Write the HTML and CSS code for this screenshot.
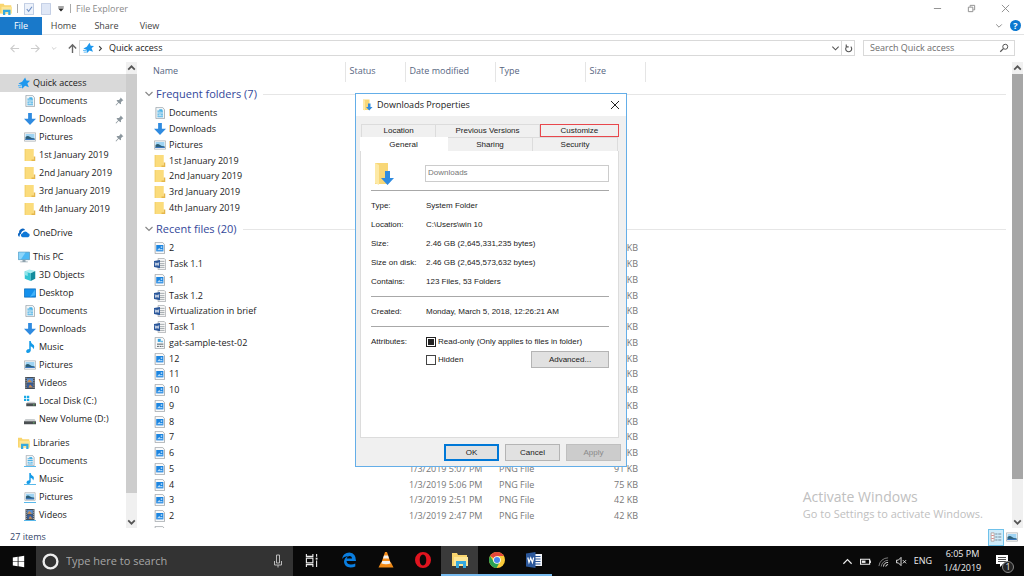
FILE: index.html
```html
<!DOCTYPE html>
<html lang="en">
<head>
  <meta charset="UTF-8" />
  <meta name="viewport" content="width=device-width, initial-scale=1.0"/>
  <title>File Explorer</title>
  <link rel="stylesheet" href="styles.css">
</head>
<body>

  <!-- Shared icons -->
  <svg class="sprite" aria-hidden="true">
    <symbol id="star" viewBox="0 0 16 16"><path d="M9.500.5l1.700 4.300 4.800.2-3.500 3.500 2 5-5-1.700L5.500 15.500l-.3-5L.5 8.700l5-2.500z" fill="#1e98ee"/><path d="M0 11.500h5M1 14h4" stroke="#5db8f5" stroke-width="1.400"/></symbol>
    <symbol id="doc" viewBox="0 0 16 16"><path d="M2.500.5h9l2.500 3v12H2.500z" fill="#f2f5f7" stroke="#97a1a8"/><path d="M4.500 5.500h3m1 0h3.500M4.500 8h7.500m-7.500 2.500h3m1 0h3.500M4.500 13h7.500" stroke="#4bb1e6" stroke-width="1.500"/><path d="M7 3h4v3H7z" fill="#4bb1e6"/></symbol>
    <symbol id="down" viewBox="0 0 16 16"><path d="M5.500 0h5v7.500H16L8 16 0 7.500h5.500z" fill="#2f8be0"/></symbol>
    <symbol id="pic" viewBox="0 0 16 16"><path d="M.5 2.500h15v11H.5z" fill="#fff" stroke="#a3a8ab"/><path d="M2 4h12v8H2z" fill="#9ed3f3"/><path d="M2 8q3-3 6 0 3 2 6 1.500V12H2z" fill="#2d5e75"/><path d="M2 10.500h12V12H2z" fill="#3a78c0"/></symbol>
    <symbol id="folder" viewBox="0 0 16 16"><path d="M1 0h12v16H1z" fill="#fbdc7c"/><path d="M13 10h2v6h-5v-2h3z" fill="#e5b64a"/><path d="M1 0h1v16H1z" fill="#f0ca63"/></symbol>
    <symbol id="cloud" viewBox="0 0 16 16"><path d="M1 12.500a3 3 0 0 1 .5-5A4.500 4.500 0 0 1 9.500 4q-5 .5-5.500 5-2.500 1-1.500 3.500z" fill="#0a64c0"/><path d="M6 13.500a2.700 2.700 0 0 1 0-5.300 4 4 0 0 1 7.300 0 2.700 2.700 0 0 1 .2 5.300z" fill="#0f78d7"/></symbol>
    <symbol id="pc" viewBox="0 0 16 16"><path d="M.5 1.500h15v10H.5z" fill="#4cb9f5" stroke="#5896b8"/><path d="M1 2h9L4 11H1z" fill="#8cd6fb"/><path d="M6 12h4v2h3v1H3v-1h3z" fill="#8fa3ae"/></symbol>
    <symbol id="cube" viewBox="0 0 16 16"><path d="M1 3l6-2.500 8 2-6 3z" fill="#a9eef2"/><path d="M1 3l8 2.500V16l-8-3z" fill="#32c4d2"/><path d="M9 5.500l6-3V13l-6 3z" fill="#138c9d"/><path d="M1 3l4 1.300v5L1 8z" fill="#8ee4ea"/></symbol>
    <symbol id="desk" viewBox="0 0 16 16"><path d="M.5 2.500h15v11H.5z" fill="#1491ed" stroke="#0869b8"/><path d="M15 3v8L8 13z" fill="#43b3fa"/></symbol>
    <symbol id="note" viewBox="0 0 16 16"><path d="M7 0h2q0 3 3 4.500T12.500 11q0-3-3.500-4v6q-.5 2.700-3.500 3T3 13q.5-2.500 4-2.500z" fill="#159be8"/></symbol>
    <symbol id="film" viewBox="0 0 16 16"><path d="M1.500 0h13v16h-13z" fill="#444c55"/><path d="M4 1.500h8v6H4z" fill="#5b8fd0"/><path d="M4 8.500h8v6H4z" fill="#395f9c"/><path d="M7 3l4 4H4zM8 10l4 4H6z" fill="#cf8b48"/><path d="M2.800 1v14M13.200 1v14" stroke="#d4d8db" stroke-dasharray="1.500 1.500"/></symbol>
    <symbol id="disk" viewBox="0 0 16 16"><path d="M2 8h12l2 3H0z" fill="#c9cdcf"/><path d="M0 11h16v4H0z" fill="#4a4f52"/><path d="M12 12.500h2v1h-2z" fill="#68d66b"/></symbol>
    <symbol id="diskc" viewBox="0 0 16 16"><path d="M0 1h3v3H0zm4 0h3v3H4zM0 5h3v3H0zm4 0h3v3H4z" fill="#19a9e6"/><path d="M5 9h9l2 2H3z" fill="#c9cdcf"/><path d="M3 11h13v4H3z" fill="#4a4f52"/><path d="M12 12.500h2v1h-2z" fill="#68d66b"/></symbol>
    <symbol id="lib" viewBox="0 0 16 16"><path d="M0 1h5l1 2h9v11H0z" fill="#f9d56e"/><path d="M2 5h14v9H2z" fill="#fde696"/><path d="M4 9h10v7h-3v-4H7v4H4z" fill="#35a9df"/></symbol>
    <symbol id="png" viewBox="0 0 16 16"><path d="M1.500.5h10l2.500 3v12H1.500z" fill="#f8f9fa" stroke="#9a9fa3"/><path d="M3 4h9.500v8.500H3z" fill="#1c85e0"/><path d="M4 11l3-3 2 2 1.500-1 1.500 2z" fill="#b9dcf8"/><path d="M9 6h2v1.500H9z" fill="#fff"/></symbol>
    <symbol id="word" viewBox="0 0 16 16"><path d="M5.500.5h8l2 2v13h-10z" fill="#f6f6f6" stroke="#a0a4a8"/><path d="M8 4.500h6M8 7.500h6M8 10h6m-6 2.500h6" stroke="#8e959b"/><path d="M0 4l8-1.500v11L0 12z" fill="#2b579a"/><path d="M1.500 6l1 4 1.500-3.500L5.500 10l1-4.200" fill="none" stroke="#fff"/></symbol>
    <symbol id="gat" viewBox="0 0 16 16"><path d="M1.500.5h10l2.500 3v12H1.500z" fill="#f8f9fa" stroke="#9a9fa3"/><path d="M5 2.500h4v4H5z" fill="#35a4e0"/><path d="M9 5h3v2H9z" fill="#6dbde8"/><path d="M4 9.500h8.500M4 12.500h2.500m1 0H10m1 0h1.500" stroke="#50585e" stroke-width="1.300"/></symbol>
    <symbol id="pin" viewBox="0 0 16 16"><path d="M10 1l5 5-2 .7-2.500 2.500.3 3L9.500 13 6.500 10 2 15l-1-1 4.700-4.800-3-2.700L4 5.200l3 .3L9.300 3z" fill="#8b969d"/></symbol>
    <symbol id="up" viewBox="0 0 10 10"><path d="M2 6.500l3-3 3 3" fill="none" stroke="#555" stroke-width="1.600"/></symbol>
    <symbol id="chev" viewBox="0 0 10 10"><path d="M1.500 3l3.500 3.500L8.500 3" fill="none" stroke="currentColor" stroke-width="1.200"/></symbol>
    <symbol id="sheet" viewBox="0 0 16 16"><path d="M2 .5h12v15H2z" fill="#dfe7f6" stroke="#b4c2dc"/></symbol>
    <symbol id="ddown" viewBox="0 0 24 24"><path d="M2 1h13v21H2z" fill="#f8d777"/><path d="M2 1l4 2v20l-4-2z" fill="#fde9a5"/><path d="M12 9h5v7h4l-6.500 7L8 16h4z" fill="#2f8be0"/></symbol>
  </svg>

  <!-- Title bar -->
  <header class="titlebar">
    <svg class="icon"><use href="#lib"/></svg>
    <span class="divider"></span>
    <svg class="icon" viewBox="0 0 16 16"><path d="M2 .5h12v15H2z" fill="#edf2fa" stroke="#aebdd9"/><path d="M5 8l2.500 3L12 5" fill="none" stroke="#6f8fc4" stroke-width="1.500"/></svg>
    <svg class="icon"><use href="#sheet"/></svg>
    <svg class="icon more" viewBox="0 0 10 10"><path d="M1.500 2.500h7" stroke="#222"/><path d="M1.500 4.500h7L5 8z" fill="#222"/></svg>
    <span class="divider"></span>
    <span class="app-name">File Explorer</span>
    <div class="window-buttons">
      <button aria-label="Minimize"><svg viewBox="0 0 10 10"><path d="M1 5h8" stroke="#888"/></svg></button>
      <button aria-label="Restore"><svg viewBox="0 0 10 10"><path d="M1.500 3.500h5v5h-5zM3.500 3V1.500h5v5H7" fill="none" stroke="#888"/></svg></button>
      <button aria-label="Close"><svg viewBox="0 0 10 10"><path d="M1 1l8 8M9 1L1 9" stroke="#888"/></svg></button>
    </div>
  </header>

  <!-- Ribbon tabs -->
  <nav class="ribbon">
    <a href="#" class="file-tab">File</a>
    <a href="#">Home</a>
    <a href="#">Share</a>
    <a href="#">View</a>
    <div class="ribbon-right">
      <svg class="chev"><use href="#chev"/></svg>
      <button class="help" aria-label="Help">?</button>
    </div>
  </nav>

  <!-- Address bar -->
  <div class="address-row">
    <div class="nav-buttons">
      <button aria-label="Back"><svg viewBox="0 0 12 12"><path d="M11 6H2m4-4L2 6l4 4" fill="none" stroke="#ccc" stroke-width="1.200"/></svg></button>
      <button aria-label="Forward"><svg viewBox="0 0 12 12"><path d="M1 6h9M6 2l4 4-4 4" fill="none" stroke="#ccc" stroke-width="1.200"/></svg></button>
      <button class="recent" aria-label="Recent locations"><svg viewBox="0 0 10 10"><use href="#chev"/></svg></button>
      <button aria-label="Up"><svg viewBox="0 0 12 12"><path d="M6 11V2M2 6l4-4 4 4" fill="none" stroke="#666" stroke-width="1.500"/></svg></button>
    </div>
    <div class="address">
      <svg class="icon"><use href="#star"/></svg>
      <svg class="crumb" viewBox="0 0 10 10"><path d="M3.500 2.500L6 5 3.500 7.500" fill="none" stroke="#444" stroke-width="1.200"/></svg>
      <span>Quick access</span>
      <button class="drop" aria-label="Previous locations"><svg viewBox="0 0 10 10"><use href="#chev"/></svg></button>
      <button class="refresh" aria-label="Refresh"><svg viewBox="0 0 12 12"><path d="M3.500 3.500a4 4 0 1 0 5.500 0M3 .8v3h3.200" fill="none" stroke="#555" stroke-width="1.500"/></svg></button>
    </div>
    <label class="search">
      <input type="text" placeholder="Search Quick access" aria-label="Search Quick access">
      <svg viewBox="0 0 12 12"><circle cx="7.500" cy="4.500" r="3" fill="none" stroke="#555" stroke-width="1.200"/><path d="M5.300 6.700L1.500 10.500" stroke="#555" stroke-width="1.500"/></svg>
    </label>
  </div>

  <main class="explorer">
    <!-- Folder tree -->
    <nav class="tree">
      <ul>
        <li class="root selected"><a href="#"><svg class="icon"><use href="#star"/></svg>Quick access</a></li>
        <li><a href="#"><svg class="icon"><use href="#doc"/></svg>Documents</a><svg class="pin"><use href="#pin"/></svg></li>
        <li><a href="#"><svg class="icon"><use href="#down"/></svg>Downloads</a><svg class="pin"><use href="#pin"/></svg></li>
        <li><a href="#"><svg class="icon"><use href="#pic"/></svg>Pictures</a><svg class="pin"><use href="#pin"/></svg></li>
        <li><a href="#"><svg class="icon"><use href="#folder"/></svg>1st January 2019</a></li>
        <li><a href="#"><svg class="icon"><use href="#folder"/></svg>2nd January 2019</a></li>
        <li><a href="#"><svg class="icon"><use href="#folder"/></svg>3rd January 2019</a></li>
        <li><a href="#"><svg class="icon"><use href="#folder"/></svg>4th January 2019</a></li>
      </ul>
      <ul>
        <li class="root"><a href="#"><svg class="icon"><use href="#cloud"/></svg>OneDrive</a></li>
      </ul>
      <ul>
        <li class="root"><a href="#"><svg class="icon"><use href="#pc"/></svg>This PC</a></li>
        <li><a href="#"><svg class="icon"><use href="#cube"/></svg>3D Objects</a></li>
        <li><a href="#"><svg class="icon"><use href="#desk"/></svg>Desktop</a></li>
        <li><a href="#"><svg class="icon"><use href="#doc"/></svg>Documents</a></li>
        <li><a href="#"><svg class="icon"><use href="#down"/></svg>Downloads</a></li>
        <li><a href="#"><svg class="icon"><use href="#note"/></svg>Music</a></li>
        <li><a href="#"><svg class="icon"><use href="#pic"/></svg>Pictures</a></li>
        <li><a href="#"><svg class="icon"><use href="#film"/></svg>Videos</a></li>
        <li><a href="#"><svg class="icon"><use href="#diskc"/></svg>Local Disk (C:)</a></li>
        <li><a href="#"><svg class="icon"><use href="#disk"/></svg>New Volume (D:)</a></li>
      </ul>
      <ul class="libraries">
        <li class="root"><a href="#"><svg class="icon"><use href="#lib"/></svg>Libraries</a></li>
        <li><a href="#"><svg class="icon"><use href="#doc"/></svg>Documents</a></li>
        <li><a href="#"><svg class="icon"><use href="#note"/></svg>Music</a></li>
        <li><a href="#"><svg class="icon"><use href="#pic"/></svg>Pictures</a></li>
        <li><a href="#"><svg class="icon"><use href="#film"/></svg>Videos</a></li>
      </ul>
    </nav>
    <div class="scrollbar tree-scroll">
      <svg><use href="#up"/></svg>
      <div class="thumb"></div>
      <svg class="flip"><use href="#up"/></svg>
    </div>

    <!-- File list -->
    <section class="files">
      <table>
        <colgroup>
          <col class="c-name"><col class="c-status"><col class="c-date"><col class="c-type"><col class="c-size"><col>
        </colgroup>
        <thead>
          <tr><th>Name</th><th>Status</th><th>Date modified</th><th>Type</th><th>Size</th><td></td></tr>
        </thead>
        <tbody>
          <tr class="group"><th colspan="6"><div><svg><use href="#chev"/></svg>Frequent folders (7)</div></th></tr>
        </tbody>
        <tbody class="rows">
          <tr><td><svg class="icon"><use href="#doc"/></svg>Documents</td></tr>
          <tr><td><svg class="icon"><use href="#down"/></svg>Downloads</td></tr>
          <tr><td><svg class="icon"><use href="#pic"/></svg>Pictures</td></tr>
          <tr><td><svg class="icon"><use href="#folder"/></svg>1st January 2019</td></tr>
          <tr><td><svg class="icon"><use href="#folder"/></svg>2nd January 2019</td></tr>
          <tr><td><svg class="icon"><use href="#folder"/></svg>3rd January 2019</td></tr>
          <tr><td><svg class="icon"><use href="#folder"/></svg>4th January 2019</td></tr>
        </tbody>
        <tbody>
          <tr class="group"><th colspan="6"><div><svg><use href="#chev"/></svg>Recent files (20)</div></th></tr>
        </tbody>
        <tbody class="rows">
          <tr><td><svg class="icon"><use href="#png"/></svg>2</td><td></td><td></td><td></td><td>KB</td></tr>
          <tr><td><svg class="icon"><use href="#word"/></svg>Task 1.1</td><td></td><td></td><td></td><td>KB</td></tr>
          <tr><td><svg class="icon"><use href="#png"/></svg>1</td><td></td><td></td><td></td><td>KB</td></tr>
          <tr><td><svg class="icon"><use href="#word"/></svg>Task 1.2</td><td></td><td></td><td></td><td>KB</td></tr>
          <tr><td><svg class="icon"><use href="#word"/></svg>Virtualization in brief</td><td></td><td></td><td></td><td>KB</td></tr>
          <tr><td><svg class="icon"><use href="#word"/></svg>Task 1</td><td></td><td></td><td></td><td>KB</td></tr>
          <tr><td><svg class="icon"><use href="#gat"/></svg>gat-sample-test-02</td><td></td><td></td><td></td><td>KB</td></tr>
          <tr><td><svg class="icon"><use href="#png"/></svg>12</td><td></td><td></td><td></td><td>KB</td></tr>
          <tr><td><svg class="icon"><use href="#png"/></svg>11</td><td></td><td></td><td></td><td>KB</td></tr>
          <tr><td><svg class="icon"><use href="#png"/></svg>10</td><td></td><td></td><td></td><td>KB</td></tr>
          <tr><td><svg class="icon"><use href="#png"/></svg>9</td><td></td><td></td><td></td><td>KB</td></tr>
          <tr><td><svg class="icon"><use href="#png"/></svg>8</td><td></td><td></td><td></td><td>KB</td></tr>
          <tr><td><svg class="icon"><use href="#png"/></svg>7</td><td></td><td></td><td></td><td>KB</td></tr>
          <tr><td><svg class="icon"><use href="#png"/></svg>6</td><td></td><td></td><td></td><td>KB</td></tr>
          <tr><td><svg class="icon"><use href="#png"/></svg>5</td><td></td><td>1/3/2019 5:07 PM</td><td>PNG File</td><td>91 KB</td></tr>
          <tr><td><svg class="icon"><use href="#png"/></svg>4</td><td></td><td>1/3/2019 5:06 PM</td><td>PNG File</td><td>75 KB</td></tr>
          <tr><td><svg class="icon"><use href="#png"/></svg>3</td><td></td><td>1/3/2019 2:51 PM</td><td>PNG File</td><td>42 KB</td></tr>
          <tr><td><svg class="icon"><use href="#png"/></svg>2</td><td></td><td>1/3/2019 2:47 PM</td><td>PNG File</td><td>42 KB</td></tr>
          <tr><td><svg class="icon"><use href="#png"/></svg>1</td><td></td><td>1/3/2019 2:37 PM</td><td>PNG File</td><td>38 KB</td></tr>
        </tbody>
      </table>
    </section>
    <div class="scrollbar file-scroll">
      <svg><use href="#up"/></svg>
      <div class="thumb"></div>
      <svg class="flip"><use href="#up"/></svg>
    </div>
  </main>

  <!-- Status bar -->
  <footer class="status">
    <span>27 items</span>
    <div class="views">
      <button class="active" aria-label="Details view"><svg viewBox="0 0 16 14"><path d="M1.500 1.500h4v11h-4z" fill="#fff" stroke="#a5928f"/><path d="M2 5h3M2 9h3" stroke="#c66"/><path d="M7 3h3m1 0h4M7 7h3m1 0h4m-8 4h3m1 0h4" stroke="#5c6c78"/></svg></button>
      <button aria-label="Large icons view"><svg viewBox="0 0 16 16"><use href="#pic"/></svg></button>
    </div>
  </footer>

  <!-- Taskbar -->
  <footer class="taskbar">
    <button class="start" aria-label="Start"><svg viewBox="0 0 16 16"><path d="M1 3.200l6-.9v5.300H1zM8 2.200L15 1v6.600H8zM1 8.400h6v5.300l-6-.9zM8 8.400h7V15l-7-1.200z" fill="#fff"/></svg></button>
    <label class="cortana">
      <svg class="ring" viewBox="0 0 16 16"><circle cx="8" cy="8" r="6.500" fill="none" stroke="#eee" stroke-width="2.200"/></svg>
      <input type="text" placeholder="Type here to search" aria-label="Type here to search">
      <svg class="mic" viewBox="0 0 10 14"><path d="M3.500 1h3v8h-3zM1.500 7v4h7V7M5 11v2.500" fill="none" stroke="#bbb"/></svg>
    </label>
    <div class="apps">
      <button aria-label="Task view"><svg class="small" viewBox="0 0 14 14"><path d="M1.500 4.500h7v5h-7zM1.500 0v2.500h7V0M1.500 14v-2.500h7V14M12.500 0v3m0 4v7" fill="none" stroke="#eee" stroke-width="1.200"/><path d="M11.500 4h2v2h-2z" fill="#eee"/></svg></button>
      <button aria-label="Edge"><svg viewBox="0 0 16 16"><path d="M1 7Q2 .5 8.500.5 15 1 15 9H5.500q.5 3.500 4.500 3.500 2.500 0 4.300-1v3Q12.500 15.500 9.500 15.500 3.500 15 3 10 3 6 7 4 2.500 4.500 1 7zM5.700 6.500H11Q11 4 8.500 4 6 4 5.700 6.500z" fill="#0a7ee0"/></svg></button>
      <button aria-label="VLC"><svg viewBox="0 0 16 16"><path d="M3 10.500h10l2.500 5H.5z" fill="#f08a17"/><path d="M7 0h2l4 12q-5 2.500-10 0z" fill="#f58c1a"/><path d="M6 3.500h4l1 3H5zM4.200 9h7.600l.8 2.500q-4.500 1.500-9.200 0z" fill="#f1f1f1"/></svg></button>
      <button aria-label="Opera"><svg viewBox="0 0 16 16"><path fill-rule="evenodd" d="M8 0a8 8 0 1 0 0 16A8 8 0 0 0 8 0zm0 2.500c2 0 3.300 2.300 3.300 5.500S10 13.500 8 13.500 4.700 11.200 4.700 8 6 2.500 8 2.500z" fill="#e0141f"/></svg></button>
      <button class="open current" aria-label="File Explorer"><svg viewBox="0 0 16 16"><use href="#lib"/></svg></button>
      <button class="open" aria-label="Chrome"><svg viewBox="0 0 16 16"><circle cx="8" cy="8" r="8" fill="#fbcb39"/><path d="M8 8L1.100 4A8 8 0 0 1 14.900 4H8z" fill="#e2473b"/><path d="M1.100 4A8 8 0 0 0 7.500 16l3.500-6.500H4.600z" fill="#2aa255"/><circle cx="8" cy="8" r="3.800" fill="#fff"/><circle cx="8" cy="8" r="3" fill="#4686ee"/></svg></button>
      <button class="open" aria-label="Word"><svg viewBox="0 0 16 16"><path d="M8 2h8v12H8z" fill="#f4f6fa"/><path d="M9 4.500h5.500M9 7h5.500M9 9.500h5.500M9 12h5.500" stroke="#2b579a"/><path d="M0 1.500L9.500 0v16L0 14.500z" fill="#2b579a"/><path d="M1.800 5.500L3 10.500l1.700-4.500 1.700 4.500 1.300-5" fill="none" stroke="#fff" stroke-width="1.200"/></svg></button>
    </div>
    <div class="tray">
      <svg viewBox="0 0 12 12"><path d="M1.500 8.500L6 4l4.500 4.500" fill="none" stroke="#eee" stroke-width="1.300"/></svg>
      <svg viewBox="0 0 12 12"><path d="M.6 3.500h9.900v5.500H.6zM11.300 5v2.500" fill="none" stroke="#eee" stroke-width="1.200"/><path d="M2 5h4v2.500H2z" fill="#eee"/></svg>
      <svg viewBox="0 0 12 12"><path d="M1 11A10 10 0 0 1 11 2M3.500 11.500A7.500 7.500 0 0 1 11 4.700" fill="none" stroke="#888"/><path d="M6 11.500a5 5 0 0 1 5-4.500M8.500 11.500A2.500 2.500 0 0 1 11 9.300" fill="none" stroke="#eee"/></svg>
      <svg viewBox="0 0 12 12"><path d="M.6 4.500h2L5.500 1.500v9L2.600 7.500h-2zM7.500 4.500l3.500 3.500m0-3.500L7.500 8" fill="none" stroke="#eee"/></svg>
      <span>ENG</span>
      <div class="clock">6:05 PM<br>1/4/2019</div>
      <button class="notify" aria-label="Notifications">
        <svg viewBox="0 0 14 14"><path d="M1 1h12v9H8l-3 3v-3H1z" fill="#fff"/><path d="M3 3.500h8M3 5.500h8M3 7.500h8" stroke="#222" stroke-width=".8"/></svg>
        <span class="badge">1</span>
      </button>
    </div>
  </footer>

  <div class="watermark">
    <p class="big">Activate Windows</p>
    <p>Go to Settings to activate Windows.</p>
  </div>

  <!-- Properties window -->
  <div class="dialog" role="dialog" aria-labelledby="dialogTitle">
    <div class="dialog-title">
      <svg class="icon"><use href="#ddown"/></svg>
      <span id="dialogTitle">Downloads Properties</span>
      <button aria-label="Close"><svg viewBox="0 0 10 10"><path d="M1 1l8 8M9 1L1 9" stroke="#222"/></svg></button>
    </div>
    <div class="dialog-body">
      <div class="tabs back-tabs">
        <button>Location</button>
        <button>Previous Versions</button>
        <button class="marked">Customize</button>
      </div>
      <div class="tabs front-tabs">
        <button class="general">General</button>
        <button>Sharing</button>
        <button>Security</button>
      </div>
      <div class="page">
        <div class="name-row">
          <svg><use href="#ddown"/></svg>
          <input type="text" value="Downloads" aria-label="Folder name">
        </div>
        <dl>
          <dt>Type:</dt><dd>System Folder</dd>
          <dt>Location:</dt><dd>C:\Users\win 10</dd>
          <dt>Size:</dt><dd>2.46 GB (2,645,331,235 bytes)</dd>
          <dt>Size on disk:</dt><dd>2.46 GB (2,645,573,632 bytes)</dd>
          <dt>Contains:</dt><dd>123 Files, 53 Folders</dd>
        </dl>
        <dl>
          <dt>Created:</dt><dd>Monday, March 5, 2018, 12:26:21 AM</dd>
        </dl>
        <div class="attributes">
          <span>Attributes:</span>
          <div class="options">
            <label><input type="checkbox" class="partial">Read-only (Only applies to files in folder)</label>
            <div class="hidden-row">
              <label><input type="checkbox">Hidden</label>
              <button>Advanced...</button>
            </div>
          </div>
        </div>
      </div>
      <div class="dialog-buttons">
        <button class="ok">OK</button>
        <button>Cancel</button>
        <button disabled>Apply</button>
      </div>
    </div>
  </div>

</body>
</html>
```

FILE: styles.css
```css
* {
  box-sizing: border-box;
}

body {
  margin: 0;
  height: 100vh;
  display: flex;
  flex-direction: column;
  overflow: hidden;
  position: relative;
  background: #fff;
  color: #222;
  font-family: "Open Sans", "Noto Sans", sans-serif;
  font-size: 9px;
  line-height: 16px;
}

button, input {
  margin: 0;
  padding: 0;
  border: none;
  background: none;
  font: inherit;
  color: inherit;
}

button {
  display: flex;
  align-items: center;
  justify-content: center;
}

a {
  color: inherit;
  text-decoration: none;
}

ul, dl, dd, p {
  margin: 0;
  padding: 0;
  list-style: none;
}

svg {
  display: block;
  flex: none;
}

.sprite {
  display: none;
}

.icon {
  width: 12px;
  height: 12px;
}

/* Title bar */
.titlebar {
  height: 17px;
  display: flex;
  align-items: center;
  gap: 5px;
}

.titlebar .divider {
  width: 1px;
  height: 9px;
  background: #aaa;
}

.titlebar .more {
  width: 8px;
  height: 8px;
}

.app-name {
  color: #8a8a8a;
}

.window-buttons {
  display: flex;
  margin-left: auto;
  padding-right: 2px;
}

.window-buttons button {
  width: 34px;
}

.window-buttons svg {
  width: 9px;
  height: 9px;
}

/* Ribbon */
.ribbon {
  height: 18px;
  display: flex;
  border-bottom: 1px solid #e2e3e4;
  color: #444;
}

.ribbon a {
  width: 43px;
  line-height: 18px;
  text-align: center;
}

.ribbon .file-tab {
  width: 42px;
  height: 18px;
  background: #1979ca;
  color: #fff;
}

.ribbon-right {
  display: flex;
  align-items: center;
  gap: 7px;
  margin-left: auto;
  padding-right: 3px;
  color: #888;
}

.chev {
  width: 8px;
  height: 8px;
}

.help {
  width: 11px;
  height: 11px;
  border-radius: 50%;
  background: #0b78d0;
  color: #fff;
  font-weight: bold;
}

/* Address bar */
.address-row {
  height: 27px;
  padding: 5px 9px 6px;
  display: flex;
  gap: 8px;
}

.nav-buttons {
  width: 62px;
  display: flex;
  align-items: center;
  gap: 10px;
}

.nav-buttons svg {
  width: 11px;
  height: 11px;
}

.nav-buttons .recent {
  color: #bbb;
}

.nav-buttons .recent svg {
  width: 6px;
}

.address {
  flex: 1;
  display: flex;
  align-items: center;
  border: 1px solid #d9d9d9;
  padding-left: 3px;
}

.address .icon {
  width: 11px;
}

.crumb {
  width: 9px;
  height: 9px;
  margin: 0 4px 0 2px;
}

.drop {
  margin-left: auto;
  width: 12px;
  color: #555;
}

.refresh {
  width: 13px;
  height: 14px;
  border-left: 1px solid #d9d9d9;
}

.drop svg,
.refresh svg {
  width: 9px;
  height: 9px;
}

.search {
  width: 152px;
  display: flex;
  align-items: center;
  border: 1px solid #d9d9d9;
  padding: 0 5px 0 6px;
}

.search input {
  flex: 1;
  min-width: 0;
}

.search input::placeholder {
  color: #6d6d6d;
  opacity: 1;
}

.search svg {
  width: 10px;
  height: 10px;
}

/* Main area */
.explorer {
  flex: 1;
  min-height: 0;
  display: flex;
}

.tree {
  width: 126px;
  padding-top: 12px;
  overflow: hidden;
}

.tree ul {
  margin-bottom: 6px;
}

.tree li {
  height: 18px;
  padding: 0 2px 0 24px;
  display: flex;
  align-items: center;
  justify-content: space-between;
}

.tree .root {
  padding-left: 18px;
}

.tree a {
  display: flex;
  align-items: center;
  gap: 3px;
  white-space: nowrap;
}

.tree .selected {
  background: #d9d9d9;
}

.libraries li:not(.root) .icon {
  border-bottom: 1px solid #58b8ea;
}

.pin {
  width: 9px;
  height: 9px;
}

.scrollbar {
  width: 11px;
  display: flex;
  flex-direction: column;
  background: #f0f0f0;
}

.scrollbar svg {
  width: 11px;
  height: 12px;
}

.scrollbar .flip {
  margin-top: auto;
  transform: rotate(180deg);
}

.tree-scroll .thumb {
  flex: 0 0 90%;
  background: #cdcdcd;
}

.file-scroll {
  margin-right: 1px;
}

.file-scroll .thumb {
  flex: 0 0 87%;
  background: #a6a6a6;
}

/* File list */
.files {
  flex: 1;
  overflow: hidden;
}

table {
  width: 100%;
  table-layout: fixed;
  border-collapse: collapse;
}

.c-name {
  width: 208px;
}

.c-status,
.c-size {
  width: 60px;
}

.c-date,
.c-type {
  width: 90px;
}

th {
  text-align: left;
  font-weight: normal;
}

th, td {
  padding: 0;
}

thead tr {
  height: 20px;
}

thead th {
  padding-left: 4px;
  border-right: 1px solid #e5e5e5;
  line-height: 18px;
  vertical-align: top;
  color: #56657f;
}

thead th:first-child {
  padding-left: 16px;
}

.group th {
  height: 24px;
}

.group div {
  display: flex;
  align-items: center;
  gap: 2px;
  padding: 0 6px 0 7px;
  font-size: 11px;
  color: #34489a;
}

.group svg {
  width: 10px;
  height: 10px;
  color: #888;
}

.group div::after {
  content: "";
  flex: 1;
  height: 1px;
  margin-left: 4px;
  background: #e6e6e6;
}

.rows tr {
  height: 16px;
  line-height: 13px;
}

.rows tr:nth-child(4n) {
  height: 15px;
}

.rows td {
  padding-left: 4px;
  vertical-align: top;
  white-space: nowrap;
  color: #777;
}

.rows td:first-child {
  padding-left: 17px;
  color: #222;
}

.rows .icon {
  float: left;
  margin: 1px 3px 0 0;
}

.rows td:nth-child(5) {
  padding-right: 7px;
  text-align: right;
}

/* Status bar */
.status {
  height: 18px;
  display: flex;
  justify-content: space-between;
  align-items: center;
  padding-left: 10px;
  color: #34466b;
}

.views {
  display: flex;
  padding-right: 4px;
}

.views button {
  width: 16px;
  height: 17px;
}

.views .active {
  border: 1px solid #6fc1ea;
  background: #cdebfa;
}

.views svg {
  width: 12px;
  height: 12px;
}

/* Taskbar */
.taskbar {
  height: 30px;
  display: flex;
  background: #090909;
  color: #eee;
}

.start {
  width: 36px;
}

.start svg {
  width: 13px;
  height: 13px;
}

.cortana {
  width: 257px;
  display: flex;
  align-items: center;
  gap: 7px;
  padding: 0 10px 0 6px;
  background: #333;
  font-size: 11px;
}

.cortana input {
  flex: 1;
}

.cortana input::placeholder {
  color: #a6a6a6;
  opacity: 1;
}

.ring {
  width: 17px;
  height: 17px;
}

.mic {
  width: 10px;
  height: 14px;
}

.apps {
  display: flex;
}

.apps button {
  width: 37px;
  border-bottom: 2px solid transparent;
}

.apps svg {
  width: 16px;
  height: 16px;
}

.apps .small {
  width: 13px;
  height: 13px;
}

.apps .open {
  border-color: #76b9ed;
}

.apps .current {
  background: #3a3a3a;
}

.tray {
  display: flex;
  align-items: center;
  gap: 7px;
  margin-left: auto;
  padding-right: 13px;
}

.tray svg {
  width: 11px;
  height: 11px;
}

.clock {
  width: 47px;
  line-height: 14px;
  text-align: center;
}

.notify {
  position: relative;
  width: 18px;
  height: 20px;
}

.tray .notify svg {
  width: 14px;
  height: 14px;
}

.badge {
  position: absolute;
  right: -3px;
  bottom: -2px;
  width: 12px;
  height: 12px;
  border: 1px solid #888;
  border-radius: 50%;
  background: #222;
  line-height: 10px;
  text-align: center;
}

.watermark {
  position: absolute;
  right: 41px;
  bottom: 54px;
  color: #c0c0c0;
  font-size: 11px;
}

.watermark .big {
  font-size: 14px;
  line-height: 18px;
}

/* Properties window */
.dialog {
  position: absolute;
  left: 355px;
  top: 93px;
  width: 272px;
  border: 1px solid #64aee8;
  background: #f0f0f0;
  font-family: "Liberation Sans", Arial, sans-serif;
  font-size: 8px;
  line-height: 12px;
}

.dialog-title {
  height: 22px;
  display: flex;
  align-items: center;
  gap: 3px;
  padding: 0 6px;
  background: #fff;
  font-family: "Open Sans", "Noto Sans", sans-serif;
  font-size: 9px;
}

.dialog-title button {
  margin-left: auto;
}

.dialog-title button svg {
  width: 10px;
  height: 10px;
}

.dialog-body {
  padding: 8px 5px 5px 4px;
}

.tabs {
  display: flex;
}

.tabs button {
  height: 13px;
  border: 1px solid #dcdcdc;
  border-left: none;
  border-bottom: none;
  background: #f0f0f0;
}

.back-tabs {
  padding: 0 2px 0 1px;
}

.back-tabs button {
  flex: 105;
}

.back-tabs button:first-child {
  flex: 75;
  border-left: 1px solid #dcdcdc;
}

.back-tabs .marked {
  flex: 79;
  border: 1px solid #e8474c;
}

.front-tabs {
  padding-right: 3px;
}

.front-tabs button {
  flex: 1;
  height: 14px;
}

.front-tabs .general {
  flex: 0 0 88px;
  border-color: #fff;
  background: #fff;
}

.page {
  min-height: 287px;
  margin-right: 2px;
  padding: 11px 9px 0 10px;
  border: 1px solid #dcdcdc;
  border-top: none;
  background: #fff;
}

.name-row {
  height: 28px;
  display: flex;
  align-items: flex-start;
  justify-content: space-between;
}

.name-row svg {
  width: 24px;
  height: 24px;
  margin-left: 2px;
}

.name-row input {
  width: 184px;
  height: 17px;
  margin-top: 3px;
  padding: 0 2px 2px;
  border: 1px solid #ccc;
  color: #777;
}

dl,
.attributes {
  display: grid;
  grid-template-columns: 55px 1fr;
  border-top: 1px solid #a8a8a8;
}

dl {
  padding: 5px 0;
  line-height: 19px;
}

.attributes {
  padding-top: 9px;
}

.options label {
  display: flex;
  align-items: center;
  gap: 2px;
}

.options input {
  appearance: none;
  width: 10px;
  height: 10px;
  border: 1px solid #444;
  background: #fff;
}

.options .partial {
  border-color: #222;
  padding: 1px;
  background: #222 content-box;
}

.hidden-row {
  display: flex;
  align-items: center;
  justify-content: space-between;
  margin-top: 3px;
}

.hidden-row button {
  width: 78px;
}

.hidden-row button,
.dialog-buttons button {
  height: 17px;
  border: 1px solid #b4b4b4;
  background: #e1e1e1;
}

.dialog-buttons {
  display: flex;
  justify-content: flex-end;
  gap: 6px;
  padding-top: 6px;
}

.dialog-buttons button {
  width: 55px;
}

.dialog-buttons .ok {
  border: 2px solid #0078d7;
}

.dialog-buttons button:disabled {
  border-color: #bfbfbf;
  background: #ccc;
  color: #8a8a8a;
}
```
